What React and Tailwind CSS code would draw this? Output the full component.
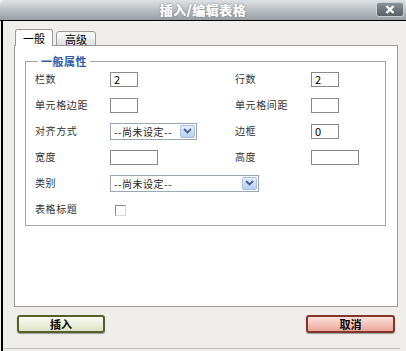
const font = "font-['SimSun','Noto_Sans_CJK_SC','Liberation_Sans',sans-serif]"

function TextBox({ value = '', w = 'w-[28px]' }) {
  return (
    <div className={`${w} h-[15px] border border-[#8a8a8a] bg-white pl-[3px] text-[11px] leading-[13px] text-black`}>
      {value}
    </div>
  )
}

function Select({ w }) {
  return (
    <div className={`${w} h-[17px] border border-[#9aa7b8] bg-white flex items-center justify-between pl-[3px] pr-[1px]`}>
      <span className="text-[10px] leading-[15px] text-[#222] tracking-[0.5px]">--尚未设定--</span>
      <span className="w-[15px] h-[13px] rounded-[2px] border border-[#a9c0e4] bg-gradient-to-b from-[#e3eefc] to-[#b8cff0] flex items-center justify-center">
        <svg width="9" height="6" viewBox="0 0 9 6">
          <path d="M1 1 L4.5 4.5 L8 1" fill="none" stroke="#4a5f86" strokeWidth="1.8" />
        </svg>
      </span>
    </div>
  )
}

function Label({ children }) {
  return <span className="text-[10px] leading-[12px] text-[#333] tracking-[0.6px]">{children}</span>
}

export default function App() {
  return (
    <div className={`w-[406px] h-[351px] bg-[#efeeea] flex flex-col overflow-hidden ${font}`}>
      {/* title bar */}
      <div className="h-[21px] shrink-0 rounded-tl-[5px] border-b border-black bg-gradient-to-b from-[#dfe2e4] to-[#979ea3] flex items-center relative">
        <div className="flex-1 text-center text-white font-bold text-[13px] leading-[20px] tracking-[0.5px] [text-shadow:0_0_1px_#fff,0_0_2px_#444]">
          插入/编辑表格
        </div>
        <div className="absolute right-[2px] top-[2px] w-[28px] h-[15px] rounded-[3px] border border-[#c9ced2] bg-gradient-to-b from-[#8a9297] to-[#596166] flex items-center justify-center">
          <svg width="10" height="9" viewBox="0 0 10 9">
            <path d="M1.5 1 L8.5 8 M8.5 1 L1.5 8" stroke="white" strokeWidth="2.4" />
          </svg>
        </div>
      </div>

      {/* body */}
      <div className="flex-1 ml-[1px] border-l-2 border-black flex flex-col">
        <div className="flex items-end gap-[3px] pl-[12px] pt-[8px] -mb-px relative z-10">
          <div className="w-[38px] h-[17px] rounded-t-[3px] border border-b-0 border-[#9a9a9a] bg-white text-center text-[11px] leading-[17px] text-black">
            一般
          </div>
          <div className="w-[40px] h-[15px] rounded-t-[3px] border border-[#9a9a9a] bg-gradient-to-b from-[#fafafa] to-[#e2e2e0] text-center text-[11px] leading-[14px] text-black">
            高级
          </div>
        </div>

        <div className="ml-[11px] w-[384px] h-[262px] border border-[#9c9c9c] bg-white pt-[9px] px-[10px]">
          <fieldset className="w-[361px] border border-[#a6a6a6] pl-[9px] pb-[3px]">
            <legend className="ml-[3px] px-[3px] text-[11px] leading-[12px] font-bold text-[#2d5ca8] tracking-[0.5px]">
              一般属性
            </legend>
            <div className="grid grid-cols-[75px_125px_76px_1fr] auto-rows-[26px] items-center -mt-px">
              <Label>栏数</Label>
              <TextBox value="2" />
              <Label>行数</Label>
              <TextBox value="2" />

              <Label>单元格边距</Label>
              <TextBox />
              <Label>单元格间距</Label>
              <TextBox />

              <Label>对齐方式</Label>
              <Select w="w-[87px]" />
              <Label>边框</Label>
              <TextBox value="0" />

              <Label>宽度</Label>
              <TextBox w="w-[48px]" />
              <Label>高度</Label>
              <TextBox w="w-[48px]" />

              <Label>类别</Label>
              <div className="col-span-3">
                <Select w="w-[149px]" />
              </div>

              <Label>表格标题</Label>
              <div className="col-span-3 pl-[5px] pt-[2px]">
                <div className="w-[11px] h-[11px] border border-t-[#8c8c8c] border-l-[#8c8c8c] border-r-[#d8d8d8] border-b-[#d8d8d8] bg-white" />
              </div>
            </div>
          </fieldset>
        </div>

        <div className="flex justify-between pl-[14px] pr-[11px] mt-[8px]">
          <button className="w-[88px] h-[18px] rounded-[3px] border-2 border-[#56602c] bg-gradient-to-b from-[#fbfcf4] to-[#dde3c4] shadow-[0_1px_1px_#999] text-[11px] leading-[14px] font-bold text-black">
            插入
          </button>
          <button className="w-[89px] h-[18px] rounded-[3px] border-2 border-[#82362a] bg-gradient-to-b from-[#fbe2dc] to-[#eba599] shadow-[0_1px_1px_#999] text-[11px] leading-[14px] font-bold text-black">
            取消
          </button>
        </div>

        <div className="mt-[15px] mr-[6px] border-b border-[#c2c2c0]" />
      </div>
    </div>
  )
}
